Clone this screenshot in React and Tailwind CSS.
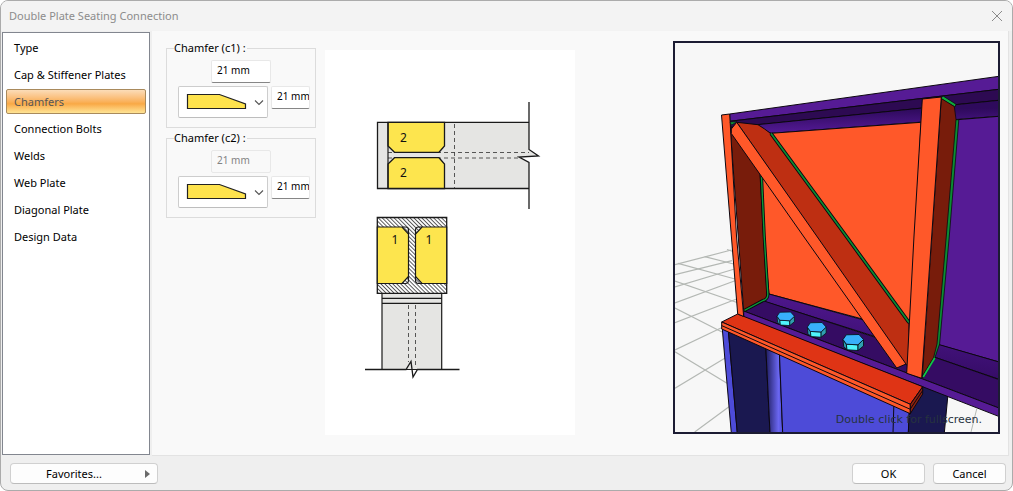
import React, { useState } from 'react';

const menuItems = [
  'Type',
  'Cap & Stiffener Plates',
  'Chamfers',
  'Connection Bolts',
  'Welds',
  'Web Plate',
  'Diagonal Plate',
  'Design Data',
];

const SizeInput = ({ label, width, disabled, defaultValue }) => (
  <input
    type="text"
    aria-label={label}
    defaultValue={defaultValue}
    disabled={disabled}
    className={`${width} h-[23px] pl-[5px] pb-[3px] text-[10px] rounded-xs border border-[#e8e8e8] outline-none ${
      disabled ? 'bg-[#f9f9f9] text-[#838383]' : 'bg-white text-black border-b-[#868686]'
    }`}
  />
);

const ChamferGroup = ({ name, topDisabled }) => (
  <fieldset className="border border-[#dcdcdc] pl-[11px] pr-[5px] pb-[9px] min-w-0">
    <legend className="-ml-1 pr-px leading-4">Chamfer ({name}) :</legend>
    <div className="flex flex-col gap-[3px] pt-1">
      <div className="pl-[33px] flex">
        <SizeInput label={`${name} length`} width="w-[60px]" disabled={topDisabled} defaultValue="21 mm" />
      </div>
      <div className="flex items-start gap-[3px]">
        <div className="relative">
          <select
            aria-label={`${name} shape`}
            className="block w-[90px] h-8 appearance-none bg-white border border-[#cdcdcd] border-b-[#bdbdbd] rounded-xs outline-none"
          >
            <option aria-label="Line" value="line"></option>
          </select>
          <svg className="absolute inset-0 pointer-events-none" width="90" height="32" viewBox="0 0 90 32">
            <path d="M9.5 8.5H41.5L67.5 18V22.5H9.5Z" fill="#fee34d" stroke="#222" strokeWidth="1.2" />
            <path d="M77 14.5L81 18.5L85 14.5" fill="none" stroke="#555" strokeWidth="1.1" />
          </svg>
        </div>
        <SizeInput label={`${name} height`} width="w-[39px]" defaultValue="21 mm" />
      </div>
    </div>
  </fieldset>
);

const Diagram = () => (
  <svg width="250" height="385" viewBox="325 50 250 385" role="img" aria-label="Connection drawing">
    <defs>
      <pattern id="hatch" width="2.8" height="2.8" patternUnits="userSpaceOnUse" patternTransform="rotate(-45)">
        <rect width="2.8" height="2.8" fill="#fff" />
        <path d="M1.4 0V2.8" stroke="#333" strokeWidth="0.8" />
      </pattern>
    </defs>

    {/* Top view */}
    <path d="M377.5 122.3H529V149.5L538.5 156L519 157L529 162.5V188.5H377.5Z" fill="#e5e5e3" />
    <path d="M529 122.3H377.5V188.5H529" fill="none" stroke="#1a1a1a" strokeWidth="1.3" />
    <g fill="none" stroke="#444" strokeWidth="0.9" strokeDasharray="4 3">
      <path d="M388 152.5H529M388 158H521M454.5 124V188" />
    </g>
    <g fill="#fde54e" stroke="#1a1a1a" strokeWidth="1.3">
      <path d="M388 122.3H444.5V146L439 152.3H394.5L388 146Z" />
      <path d="M394.5 157.7H439L444.5 164V188.5H388V164Z" />
    </g>
    <path d="M388 122V188.5" stroke="#1a1a1a" strokeWidth="1.2" />
    <path d="M529 102V149.5L538.5 156L519 157L529 162.5V209" fill="none" stroke="#1a1a1a" strokeWidth="1.3" />

    {/* Section */}
    <path d="M382 293H441.7V369.5H382Z" fill="#e5e5e3" stroke="#1a1a1a" strokeWidth="1.2" />
    <path d="M382 298.4H441.7M382 303.4H441.7" stroke="#1a1a1a" strokeWidth="1.3" />
    <path d="M408.5 305V362M415.5 305V368" stroke="#444" strokeWidth="0.9" strokeDasharray="4 3" />
    <path d="M377.3 217.5H446.7V293.3H377.3Z" fill="url(#hatch)" stroke="#1a1a1a" strokeWidth="1.3" />
    <g fill="#fde54e" stroke="#1a1a1a" strokeWidth="1.2">
      <path d="M377.3 227H402L408.5 234V276.5L402 283.5H377.3Z" />
      <path d="M446.7 227H422L415.5 234V276.5L422 283.5H446.7Z" />
    </g>
    <g fill="none" stroke="#1a1a1a" strokeWidth="1.2">
      <path d="M402 227H405.5Q408.5 227 408.5 230V234M402 283.5H405.5Q408.5 283.5 408.5 280V276" />
      <path d="M422 227H418.5Q415.5 227 415.5 230V234M422 283.5H418.5Q415.5 283.5 415.5 280V276" />
    </g>
    <path d="M365 369.5H406L411 361.5L413 377L417.5 369.5H459.5" fill="none" stroke="#1a1a1a" strokeWidth="1.3" />

    <g className="font-['Noto_Sans']" fontSize="12" fill="#111" textAnchor="middle">
      <text x="403.5" y="142">2</text>
      <text x="403.5" y="177">2</text>
      <text x="395" y="244">1</text>
      <text x="429" y="244">1</text>
    </g>
  </svg>
);

const Bolt = ({ x, y, scale }) => (
  <g transform={`translate(${x} ${y}) scale(${scale})`} stroke="#06121c" strokeWidth="0.9" strokeLinejoin="round">
    <path d="M0 5L3.3 9.7L4 15.3L0.7 12Z" fill="#2c9fb5" />
    <path d="M3.3 9.7L15 10.3V16L4 15.3Z" fill="#4ff5fb" />
    <path d="M15 10.3L20.5 5V11.5L15 16Z" fill="#2f9fb0" />
    <path d="M0 5L3.3 0.3L16 0L20.5 5L15 10.3L3.3 9.7Z" fill="#38b0fb" />
  </g>
);

const Preview = () => (
  <svg className="block w-full h-auto" viewBox="675 43 323 389" role="img" aria-label="3D preview">
    <defs>
      <linearGradient id="topFillet" x1="0" y1="0" x2="0.06" y2="1">
        <stop offset="0.3" stopColor="#2e0a5c" />
        <stop offset="1" stopColor="#541a96" />
      </linearGradient>
      <linearGradient id="lowFillet" x1="0" y1="1" x2="0.3" y2="0">
        <stop offset="0.2" stopColor="#330b63" />
        <stop offset="1" stopColor="#501890" />
      </linearGradient>
      <linearGradient id="columnFillet">
        <stop offset="0" stopColor="#1d1b5c" />
        <stop offset="0.75" stopColor="#6a66f0" />
        <stop offset="1" stopColor="#4d4bd8" />
      </linearGradient>
    </defs>
    <rect x="675" y="43" width="323" height="389" fill="#f7f7f7" />

    {/* Ground grid */}
    <g stroke="#b4b8b4" strokeWidth="1.2" fill="none">
      <path d="M675 264.7L731.3 250M675 274.7L732 260.7M675 287L733.7 269.3M675 303L735 280.7M675 322.7L736 299.3M675 350L722 327.5M675 388.3L726 357.5M694.7 432L730 406" />
      <path d="M727 249.5L733 251.5M704.7 256.7L733.7 264M678 263.3L735 279M675 281L737 302.5M675 308L722 332M675 351.7L727 383.3" />
    </g>

    <g stroke="#0c0710" strokeWidth="1" strokeLinejoin="round">
      {/* Lower column */}
      <path d="M722.3 329L728.3 330L737.3 433H731.3Z" fill="#4d4bd8" />
      <path d="M728.3 330L765.7 345L770 433H737.3Z" fill="#1a1850" />
      <path d="M765.7 345L779.3 350L782.7 433H770Z" fill="url(#columnFillet)" />
      <path d="M779.3 350L909.5 410L908.3 433H782.7Z" fill="#4d4bd8" />
      <path d="M894 400L893 433" />
      <path d="M909.5 405L923 385L948 394L944.3 433H908.3Z" fill="#1a1850" />
      <path d="M976.7 409L971 432" stroke="#b4b8b4" />

      {/* Beam top flange */}
      <path d="M729.7 114L999 76.3V89.3L729.7 121.3Z" fill="#561b95" />
      <path d="M729.7 121.3L999 89.3V100.3L758 124.7L730 127Z" fill="#2d0a52" />
      <path d="M750 125.4L999 100.3V116.3L771.7 133.3Z" fill="url(#topFillet)" />

      {/* Beam web */}
      <path d="M956 119.8L999 116.3V362L936 344Z" fill="#561b95" />
      <path d="M755 128L771 133.3L921 122.3L911 332L769 294L758 175Z" fill="#ff5829" />

      {/* Beam bottom flange */}
      <path d="M769 294L911 333L937 344L999 362V379.3L934 357L905 346L765 301.7Z" fill="url(#lowFillet)" />
      <path d="M764 301L905 347L934 357L999 379.6V408L743.7 311Z" fill="#350c63" />
      <path d="M743.7 311L999 408V416.5L743.7 317Z" fill="#561b95" />

      {/* Seating plates */}
      <path d="M737.7 314L922.7 386.7L910.3 404.3L721.7 322Z" fill="#df3415" />
      <path d="M721.7 322L910.3 404.3V413.7L721.7 329Z" fill="#ff5829" />
      <path d="M721.7 325.6L910.3 409.3" />
      <path d="M910.3 404.3L922.7 386.7V394L910.3 413.7Z" fill="#8a210f" />
      <path d="M910.3 409L922.7 390.5" />

      {/* End plate */}
      <path d="M730 125L760 174L763.5 236L767 294L767 298L743.7 311Z" fill="#781c0b" />
      <path d="M761.4 175L764.2 236L767.8 294Q768 299 763 300.5L744.5 310.3" fill="none" strokeWidth="3.2" />
      <path d="M761.4 175L764.2 236L767.8 294Q768 299 763 300.5L744.5 310.3" fill="none" stroke="#0b9a38" strokeWidth="1.4" />
      <path d="M721.5 115L729.7 114L736.5 236L743.7 316.5L737.7 314Z" fill="#ff5829" />
      <path d="M730 122L737 121.7L731.5 125Z" fill="#0b9a38" strokeWidth="0.6" />

      {/* Diagonal plate */}
      <path d="M736.7 122.3L758 124.7Q765 129 770 133L843 232L909 324V366L905 364Z" fill="#be2f12" />
      <path d="M771 133.5L845 234.5L909 322.5" fill="none" strokeWidth="3.6" />
      <path d="M771 133.5L845 234.5L909 322.5" fill="none" stroke="#0b8c33" strokeWidth="1.7" />
      <path d="M736.7 122.3L816.7 236L906 364L896.7 368L803.3 236L731.3 133.5V129Z" fill="#ff5829" />

      {/* Stiffener */}
      <path d="M955 119.7H958.8L949.3 236L939.6 344L934.8 358L924.5 376.5L922 377.5Z" fill="#0b8c33" strokeWidth="0.8" />
      <path d="M941.3 97L943.5 96.3L956 104.2L955 107L941.3 99Z" fill="#0cab3c" strokeWidth="0.8" />
      <path d="M941.3 98.5L954.3 106.5L956 119.3L946.3 236L937 344L933.6 357.5L922.3 376Z" fill="#781c0b" strokeWidth="0.8" />
      <path d="M934.8 358L923.3 377" stroke="#10c84a" strokeWidth="1.5" />
      <path d="M922.3 99L941.3 97L931.7 236L921.7 378.3L906.7 373.3L914 236Z" fill="#ff5829" />
    </g>

    <Bolt x={777} y={312} scale={0.85} />
    <Bolt x={807.3} y={322.5} scale={0.92} />
    <Bolt x={843} y={334.5} scale={1} />
  </svg>
);

const DialogButton = ({ children }) => (
  <button
    type="button"
    className="w-[73px] h-[21px] bg-[#fdfdfd] border border-[#d0d0d0] border-b-[#bcbcbc] rounded-sm hover:bg-[#eef4fb]"
  >
    {children}
  </button>
);

const App = () => {
  const [active, setActive] = useState('Chamfers');

  return (
    <div className="min-h-screen flex flex-col bg-[#efefef] border border-[#ababab] rounded-lg overflow-hidden font-['Noto_Sans','Open_Sans',sans-serif] text-[11px] leading-4 text-black">
      {/* Title bar */}
      <header className="h-[30px] shrink-0 flex items-center justify-between pl-2 pr-[9px] bg-[#f3f3f3]">
        <h1 className="text-[#8c8c8c]">Double Plate Seating Connection</h1>
        <button type="button" aria-label="Close">
          <svg width="12" height="12" viewBox="0 0 12 12">
            <path d="M1 1L11 11M11 1L1 11" stroke="#8a8a8a" strokeWidth="1" />
          </svg>
        </button>
      </header>

      <div className="flex-1 flex gap-[2px] pl-px pr-[3px]">
        {/* Sidebar */}
        <nav className="w-[148px] shrink-0 my-px bg-white border border-[#82868f]">
          <ul className="flex flex-col gap-[2px] px-[3px] py-[2px]">
            {menuItems.map((item) => (
              <li key={item}>
                <button
                  type="button"
                  onClick={() => setActive(item)}
                  className={`w-full h-[25px] px-[7px] text-left border rounded-xs ${
                    active === item
                      ? 'border-[#a98a5c] text-[#565656] bg-linear-to-b from-[#fbdcb8] via-[#f9a945] via-60% to-[#fee494]'
                      : 'border-transparent'
                  }`}
                >
                  {item}
                </button>
              </li>
            ))}
          </ul>
        </nav>

        {/* Content */}
        <main className="flex-1 flex items-start bg-[#f9f9f9] border-r border-b border-[#e3e3e3] pl-[14px] pr-2 pb-5">
          <div className="w-[150px] shrink-0 flex flex-col gap-[2px] pt-[9px]">
            <ChamferGroup name="c1" />
            <ChamferGroup name="c2" topDisabled />
          </div>
          <div className="shrink-0 ml-[9px] mt-[19px] bg-white">
            <Diagram />
          </div>
          <div className="relative w-[327px] shrink-0 ml-auto mt-[10px] border-2 border-[#1c1c33]">
            <Preview />
            <span className="absolute right-4 bottom-1 font-['DejaVu_Sans',sans-serif] text-[11px] text-[#26333f]">
              Double click for fullscreen.
            </span>
          </div>
        </main>
      </div>

      {/* Footer */}
      <footer className="shrink-0 flex items-center gap-2 pl-[9px] pr-[6px] pt-[7px] pb-[6px]">
        <button
          type="button"
          className="relative mr-auto w-[148px] h-[21px] pr-5 bg-[#fdfdfd] border border-[#d0d0d0] border-b-[#bcbcbc] rounded-sm"
        >
          Favorites...
          <svg className="absolute right-[7px] top-[6px]" width="5" height="8" viewBox="0 0 5 8">
            <path d="M0 0L5 4L0 8Z" fill="#6a6a6a" />
          </svg>
        </button>
        <DialogButton>OK</DialogButton>
        <DialogButton>Cancel</DialogButton>
      </footer>
    </div>
  );
};

export default App;
